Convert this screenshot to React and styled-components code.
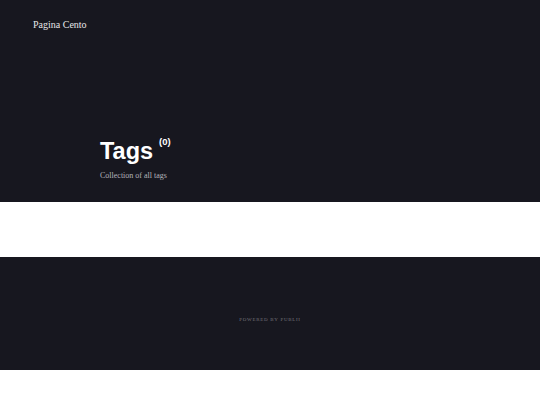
import React from "react"
import styled, { createGlobalStyle } from "styled-components"

const GlobalStyle = createGlobalStyle`
  html, body {
    margin: 0;
    padding: 0;
    background: #ffffff;
  }
`

const Header = styled.header`
  background: #17171f;
  height: 202px;
  display: flex;
  flex-direction: column;
  box-sizing: border-box;
`

const Logo = styled.div`
  font-family: "Liberation Serif", serif;
  font-size: 10px;
  line-height: 12px;
  color: #e6e6e8;
  padding: 19px 0 0 33px;
`

const Hero = styled.div`
  padding: 105px 0 0 100px;
`

const Title = styled.h1`
  margin: 0;
  font-family: "Liberation Sans", Arial, sans-serif;
  font-weight: 700;
  font-size: 23.5px;
  line-height: 30px;
  color: #ffffff;
  display: flex;
  align-items: flex-start;
`

const Count = styled.sup`
  font-size: 9.5px;
  line-height: 10px;
  margin-left: 6px;
  margin-top: 1px;
`

const Subtitle = styled.p`
  margin: 5px 0 0;
  font-family: "Liberation Serif", serif;
  font-size: 8px;
  color: #b4b4ba;
`

const Main = styled.main`
  height: 55px;
  background: #ffffff;
`

const Footer = styled.footer`
  background: #17171f;
  height: 113px;
  display: flex;
  align-items: center;
  justify-content: center;
  padding-top: 11px;
  box-sizing: border-box;
`

const Powered = styled.p`
  margin: 0;
  font-family: "Liberation Serif", serif;
  font-size: 5px;
  letter-spacing: 0.7px;
  text-transform: uppercase;
  color: #75757c;
`

export default function App() {
  return (
    <>
      <GlobalStyle />
      <Header>
        <Logo>Pagina Cento</Logo>
        <Hero>
          <Title>
            Tags <Count>(0)</Count>
          </Title>
          <Subtitle>Collection of all tags</Subtitle>
        </Hero>
      </Header>
      <Main />
      <Footer>
        <Powered>Powered by Publii</Powered>
      </Footer>
    </>
  )
}
